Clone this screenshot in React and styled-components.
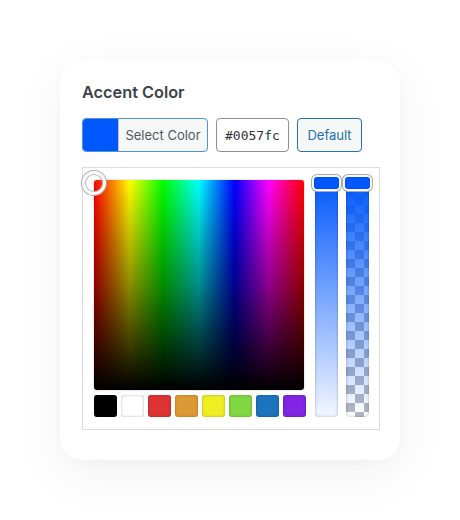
import React from "react";
import styled, { createGlobalStyle } from "styled-components";

const GlobalStyle = createGlobalStyle`
  html, body {
    margin: 0;
    padding: 0;
    background: #ffffff;
  }
  body {
    font-family: Inter, "Noto Sans", sans-serif;
  }
`;

const palette = ["#000000", "#ffffff", "#dd3333", "#dd9933", "#eeee22", "#81d742", "#1e73be", "#8224e3"];

const Page = styled.div`
  width: 460px;
  height: 520px;
  padding: 60px;
  box-sizing: border-box;
`;

const Card = styled.div`
  width: 340px;
  box-sizing: border-box;
  padding: 22px 19px 30px 22px;
  background: #fff;
  border-radius: 22px;
  box-shadow: 0 14px 50px rgba(0, 0, 0, 0.06), 0 2px 10px rgba(0, 0, 0, 0.02);
`;

const Title = styled.h2`
  margin: 0 0 16px;
  font-size: 16.3px;
  line-height: 20px;
  font-weight: 600;
  color: #3c434a;
`;

const Controls = styled.div`
  display: flex;
  gap: 8px;
  margin-bottom: 15px;
`;

const ColorButton = styled.button`
  display: flex;
  width: 126px;
  height: 34px;
  padding: 0;
  border: 1px solid #4f94d4;
  border-radius: 4px;
  overflow: hidden;
  background: #f6f7f7;
  font: inherit;
  cursor: pointer;
`;

const Preview = styled.span`
  width: 35px;
  height: 100%;
  background: ${(p) => p.$color};
  border-right: 1px solid #c3c4c7;
`;

const ButtonLabel = styled.span`
  flex: 1;
  display: flex;
  align-items: center;
  justify-content: center;
  font-size: 13px;
  color: #50575e;
`;

const HexInput = styled.input`
  width: 73px;
  height: 34px;
  box-sizing: border-box;
  padding: 0 0 0 8px;
  border: 1px solid #8c8f94;
  border-radius: 4px;
  background: #fff;
  font-family: "DejaVu Sans Mono", "Liberation Mono", monospace;
  font-size: 13px;
  color: #2c3338;
  outline: none;
`;

const DefaultButton = styled.button`
  width: 65px;
  height: 34px;
  padding: 0;
  border: 1px solid #2271b1;
  border-radius: 4px;
  background: #f6f7f7;
  color: #2271b1;
  font-family: inherit;
  font-size: 13px;
  cursor: pointer;
`;

const PickerBox = styled.div`
  display: flex;
  gap: 9px;
  width: 298px;
  box-sizing: border-box;
  padding: 12px 12px 12px 11px;
  border: 1px solid #dcdcde;
  background: #fff;
`;

const MainColumn = styled.div`
  display: flex;
  flex-direction: column;
  gap: 5px;
`;

const Square = styled.div`
  position: relative;
  width: 210px;
  height: 210px;
  border-radius: 3px;
  background: linear-gradient(to bottom, rgba(0, 0, 0, 0), rgba(0, 0, 0, 0.45) 50%, #000),
    linear-gradient(to right, #ff0000, #ffff00 17%, #00ff00 33%, #00ffff 50%, #0000ff 67%, #ff00ff 83%, #ff0000);
  box-shadow: 0 0 2px rgba(0, 0, 0, 0.3);
`;

const SquareHandle = styled.span`
  position: absolute;
  left: -12px;
  top: -9px;
  width: 24px;
  height: 24px;
  box-sizing: border-box;
  border-radius: 50%;
  border: 3px solid #f6f7f7;
  box-shadow: 0 0 0 1px #a7aaad, inset 0 0 0 1px #a7aaad;
`;

const Palette = styled.div`
  display: flex;
  gap: 4px;
`;

const Swatch = styled.span`
  width: 23px;
  height: 22px;
  border-radius: 3px;
  background: ${(p) => p.$color};
  box-shadow: inset 0 0 3px rgba(0, 0, 0, 0.28);
`;

const Sliders = styled.div`
  display: flex;
  gap: 8px;
  margin-top: -2px;
`;

const checker = `
  linear-gradient(45deg, #b4b8c0 25%, transparent 25%, transparent 75%, #b4b8c0 75%),
  linear-gradient(45deg, #b4b8c0 25%, transparent 25%, transparent 75%, #b4b8c0 75%)
`;

const Slider = styled.div`
  position: relative;
  width: 23px;
  height: 239px;
  border-radius: 4px;
  box-shadow: inset 0 0 3px rgba(0, 0, 0, 0.3);
  background: ${(p) =>
    p.$alpha
      ? `linear-gradient(to bottom, rgba(0, 87, 252, 1), rgba(0, 87, 252, 0)), ${checker}, #fff`
      : "linear-gradient(to bottom, #0057fc, #f4f7ff)"};
  background-size: ${(p) => (p.$alpha ? "100% 100%, 18px 18px, 18px 18px" : "100% 100%")};
  background-position: ${(p) => (p.$alpha ? "0 0, 0 0, 9px 9px" : "0 0")};
`;

const SliderHandle = styled.span`
  position: absolute;
  left: -3px;
  top: -3px;
  width: 29px;
  height: 16px;
  box-sizing: border-box;
  border-radius: 5px;
  border: 2px solid #f6f7f7;
  background: #0057fc;
  box-shadow: 0 0 0 1px #a7aaad, inset 0 0 0 1px rgba(0, 0, 0, 0.1);
`;

export default function App() {
  return (
    <Page>
      <GlobalStyle />
      <Card>
        <Title>Accent Color</Title>
        <Controls>
          <ColorButton type="button">
            <Preview $color="#0057fc" />
            <ButtonLabel>Select Color</ButtonLabel>
          </ColorButton>
          <HexInput value="#0057fc" readOnly />
          <DefaultButton type="button">Default</DefaultButton>
        </Controls>
        <PickerBox>
          <MainColumn>
            <Square>
              <SquareHandle />
            </Square>
            <Palette>
              {palette.map((c) => (
                <Swatch key={c} $color={c} />
              ))}
            </Palette>
          </MainColumn>
          <Sliders>
            <Slider>
              <SliderHandle />
            </Slider>
            <Slider $alpha>
              <SliderHandle />
            </Slider>
          </Sliders>
        </PickerBox>
      </Card>
    </Page>
  );
}
